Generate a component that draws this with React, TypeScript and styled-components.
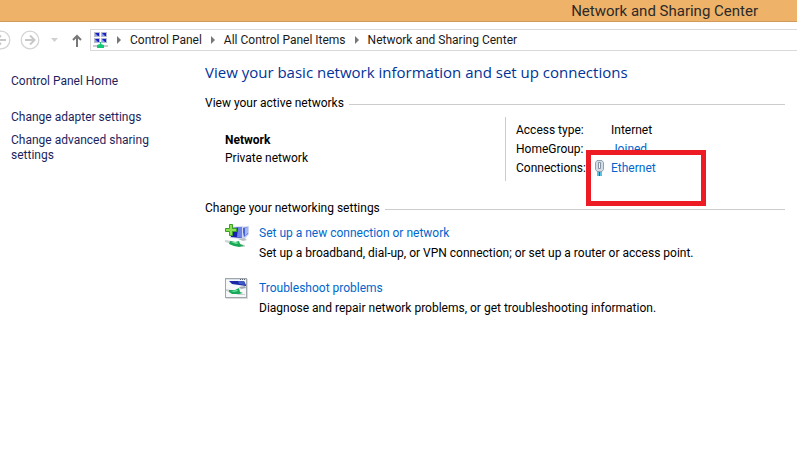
import React from 'react';
import styled, { createGlobalStyle } from 'styled-components';

const GlobalStyle = createGlobalStyle`
  * { box-sizing: border-box; }
  body {
    margin: 0;
    background: #fff;
    color: #000;
    font-family: Roboto, "Open Sans", sans-serif;
    font-size: 12px;
    line-height: 15px;
    overflow-x: hidden;
  }
  h1, h2, p, dl, dd, dt, ul { margin: 0; padding: 0; font-weight: 400; }
`;

const Window = styled.div`
  display: flex;
  flex-direction: column;
  min-height: 100vh;
`;

const TitleBar = styled.header`
  display: flex;
  justify-content: flex-end;
  padding: 1px 39px 0 0;
  background: #efb269;
  border-bottom: 1px solid #d09a5b;
  color: #2b2a28;
  font-size: 15px;
  line-height: 20px;
`;

const NavBar = styled.nav`
  display: flex;
  align-items: center;
  padding-top: 7px;
`;

const HistoryButtons = styled.div`
  display: flex;
  align-items: center;
  width: 90px;
  flex: none;
`;

const IconButton = styled.button<{ $width: number }>`
  display: flex;
  align-items: center;
  justify-content: flex-end;
  width: ${(p) => p.$width}px;
  height: 22px;
  padding: 0;
  border: 0;
  background: none;
  overflow: hidden;
  svg { flex: none; display: block; }
`;

const AddressBar = styled.div`
  display: flex;
  align-items: center;
  flex: 1;
  height: 22px;
  padding-left: 2px;
  border: 1px solid #d9d9d9;
  border-right: 0;
  svg { flex: none; }
`;

const Crumb = styled.a`
  color: #1a1a1a;
  text-decoration: none;
  white-space: nowrap;
`;

const CrumbArrow = styled.svg`
  width: 4px;
  height: 8px;
  margin: 0 9px;
  fill: #777;
`;

const Body = styled.div`
  display: flex;
  flex: 1;
`;

const Sidebar = styled.aside`
  display: flex;
  flex-direction: column;
  gap: 8px;
  flex: none;
  width: 205px;
  padding: 23px 45px 0 11px;
`;

const SideLink = styled.a<{ $home?: boolean }>`
  color: #1c1f5e;
  text-decoration: none;
  margin-bottom: ${(p) => (p.$home ? 13 : 0)}px;
`;

const Content = styled.main`
  flex: 1;
  min-width: 0;
  padding: 10px 12px 0 0;
`;

const Heading = styled.h1`
  color: #003399;
  font-family: "Open Sans", sans-serif;
  font-size: 15px;
  line-height: 22px;
  white-space: nowrap;
`;

const SectionTitle = styled.h2`
  display: flex;
  align-items: center;
  gap: 5px;
  font-size: 12px;
  line-height: 16px;
  white-space: nowrap;
  &::after {
    content: "";
    flex: 1;
    height: 1px;
    margin-top: 2px;
    background: #ccc;
  }
`;

const ActiveSection = styled.section`
  margin-top: 12px;
`;

const ActiveNetwork = styled.div`
  display: flex;
  padding: 6px 0 0 20px;
`;

const NetworkName = styled.div`
  flex: 0 0 280px;
  padding-top: 14px;
  line-height: 18px;
`;

const Details = styled.dl`
  display: grid;
  grid-template-columns: 95px auto;
  grid-auto-rows: 19px;
  line-height: 19px;
  padding: 4px 0 3px 10px;
  border-left: 1px solid #ccc;
  white-space: nowrap;
`;

const Link = styled.a`
  color: #0066cc;
  text-decoration: none;
`;

const Connection = styled.dd`
  position: relative;
`;

const PlugIcon = styled.svg`
  position: absolute;
  left: -16px;
  top: 1px;
`;

const Highlight = styled.div`
  position: absolute;
  left: -25px;
  top: -9px;
  width: 120px;
  height: 56px;
  border: 5px solid #ed1c24;
  pointer-events: none;
`;

const SettingsSection = styled.section`
  margin-top: 19px;
`;

const Tasks = styled.ul`
  display: flex;
  flex-direction: column;
  gap: 15px;
  padding: 7px 0 0 20px;
  list-style: none;
`;

const Task = styled.li`
  display: grid;
  grid-template-columns: 34px 1fr;
  line-height: 20px;
  white-space: nowrap;
`;

const BackIcon = () => (
  <svg width="20" height="20" viewBox="0 0 20 20" fill="none">
    <circle cx="10" cy="10" r="8.8" stroke="#d4d4d4" strokeWidth="1.3" />
    <path d="M15 10H6M10 5.500L5.500 10L10 14.500" stroke="#c8c8c8" strokeWidth="2" />
  </svg>
);

const ForwardIcon = () => (
  <svg width="20" height="20" viewBox="0 0 20 20" fill="none">
    <circle cx="10" cy="10" r="8.8" stroke="#d4d4d4" strokeWidth="1.3" />
    <path d="M5 10H14M10 5.500L14.500 10L10 14.500" stroke="#c8c8c8" strokeWidth="2" />
  </svg>
);

const NetworkIcon = () => (
  <svg width="15" height="16" viewBox="0 0 15 16">
    {[[1, 0], [8, 0], [1, 6], [8, 6]].map(([x, y]) => (
      <g key={`${x}-${y}`}>
        <rect x={x} y={y} width="6" height="5" fill="#b4bccd" />
        <rect x={x + 1} y={y + 1} width="4" height="3" fill="#1a1ec0" />
        <path d={`M${x + 1} ${y + 4}v-3l3 3z`} fill="#8c9cf0" />
      </g>
    ))}
    <rect y="13" width="15" height="2" fill="#c8cccc" />
    <path d="M7 10h1v2l3 1v3H4v-3l3-1z" fill="#14c878" />
  </svg>
);

const SetupIcon = () => (
  <svg width="25" height="26" viewBox="0 0 25 26">
    <path d="M15 4l9-1v8l-4 5-5-1z" fill="#ccd6f0" />
    <path d="M17 5l6-1v7l-4 3z" fill="#4a62da" />
    <path d="M20 5l3-1v6l-3 3z" fill="#a5b6f5" />
    <path d="M5 4l13-1v13L5 15z" fill="#d3dced" />
    <path d="M6 5l11-1v11L6 14z" fill="#1a20b0" />
    <path d="M13 4l4 0v11l-5-1z" fill="#6c82e6" />
    <path d="M13 16l6-1 3 2-4 1z" fill="#b6bfc3" />
    <path d="M0 17l7 1 13 4v2l-6-1-14-4z" fill="#cfd5d5" />
    <path d="M5 18l5 1 4-1 1 3 4 2-5 1-5-1-5-2z" fill="#18a854" />
    <path d="M6 19l5 0 3 1-3 1z" fill="#6be49c" />
    <path d="M4.500 1.500h3v4h4v3h-4v4h-3v-4h-4v-3h4z" fill="#8be055" stroke="#3aa028" />
  </svg>
);

const TroubleshootIcon = () => (
  <svg width="24" height="22" viewBox="0 0 24 22">
    <rect x="1" y="1" width="22" height="20" fill="#dcdcdc" />
    <rect x=".5" y=".5" width="21" height="19" fill="#f7f8f9" stroke="#a0a6ac" />
    <path d="M1 1h20v1H1z" fill="#dbe1e9" />
    <path d="M15 1h1v1h-1zM17 1h1v1h-1zM19 1h1v1h-1z" fill="#59616c" />
    <path d="M4 3h15l2 4v1L7 6z" fill="#1b28a8" />
    <path d="M13 3h6l1 4-6-1z" fill="#3f5cc4" />
    <path d="M14 9l6-1 1 2-5 1z" fill="#a0a9ae" />
    <path d="M1 11l5 1 8 4 6 0v1l-6 0-13-4z" fill="#c8d0d2" />
    <path d="M4 12l6 0 4-2 1 4 3 1-4 1-7 0-3-2z" fill="#18a857" />
    <path d="M6 13l6-1 1 1-4 1z" fill="#6be2a0" />
  </svg>
);

const Arrow = () => (
  <CrumbArrow viewBox="0 0 4 8" aria-hidden="true">
    <path d="M0 0L4 4L0 8z" />
  </CrumbArrow>
);

export default function App() {
  return (
    <Window>
      <GlobalStyle />
      <TitleBar>Network and Sharing Center</TitleBar>
      <NavBar aria-label="Location">
        <HistoryButtons>
          <IconButton $width={11} aria-label="Back"><BackIcon /></IconButton>
          <IconButton $width={29} aria-label="Forward"><ForwardIcon /></IconButton>
          <IconButton $width={18} aria-label="Recent locations">
            <svg width="7" height="4" viewBox="0 0 7 4"><path d="M0 0h7L3.500 4z" fill="#d0d0d0" /></svg>
          </IconButton>
          <IconButton $width={24} aria-label="Up one level">
            <svg width="10" height="13" viewBox="0 0 10 13" fill="none" stroke="#777" strokeWidth="2">
              <path d="M5 13V2M1 6L5 2L9 6" />
            </svg>
          </IconButton>
        </HistoryButtons>
        <AddressBar>
          <NetworkIcon />
          <Arrow />
          <Crumb href="#control-panel">Control Panel</Crumb>
          <Arrow />
          <Crumb href="#all-items">All Control Panel Items</Crumb>
          <Arrow />
          <Crumb href="#network">Network and Sharing Center</Crumb>
        </AddressBar>
      </NavBar>
      <Body>
        <Sidebar>
          <SideLink $home href="#home">Control Panel Home</SideLink>
          <SideLink href="#adapter">Change adapter settings</SideLink>
          <SideLink href="#sharing">Change advanced sharing settings</SideLink>
        </Sidebar>
        <Content>
          <Heading>View your basic network information and set up connections</Heading>
          <ActiveSection>
            <SectionTitle>View your active networks</SectionTitle>
            <ActiveNetwork>
              <NetworkName>
                <strong>Network</strong>
                <p>Private network</p>
              </NetworkName>
              <Details>
                <dt>Access type:</dt>
                <dd>Internet</dd>
                <dt>HomeGroup:</dt>
                <dd><Link href="#homegroup">Joined</Link></dd>
                <dt>Connections:</dt>
                <Connection>
                  <PlugIcon width="10" height="17" viewBox="0 0 10 17" aria-hidden="true">
                    <path d="M2 .5h5l1.500 2v7l-1.500 2H2l-1.500-2v-7z" fill="#d3dce4" stroke="#93a2b0" />
                    <path d="M3.500 2.500h2v6h-2z" fill="#f5f8fb" stroke="#8595a5" />
                    <path d="M2 12h5v4H2z" fill="#5cc0e0" />
                    <path d="M4.500 12v4" stroke="#176f95" />
                  </PlugIcon>
                  <Link href="#ethernet">Ethernet</Link>
                  <Highlight />
                </Connection>
              </Details>
            </ActiveNetwork>
          </ActiveSection>
          <SettingsSection>
            <SectionTitle>Change your networking settings</SectionTitle>
            <Tasks>
              <Task>
                <SetupIcon />
                <div>
                  <Link href="#setup">Set up a new connection or network</Link>
                  <p>Set up a broadband, dial-up, or VPN connection; or set up a router or access point.</p>
                </div>
              </Task>
              <Task>
                <TroubleshootIcon />
                <div>
                  <Link href="#troubleshoot">Troubleshoot problems</Link>
                  <p>Diagnose and repair network problems, or get troubleshooting information.</p>
                </div>
              </Task>
            </Tasks>
          </SettingsSection>
        </Content>
      </Body>
    </Window>
  );
}
